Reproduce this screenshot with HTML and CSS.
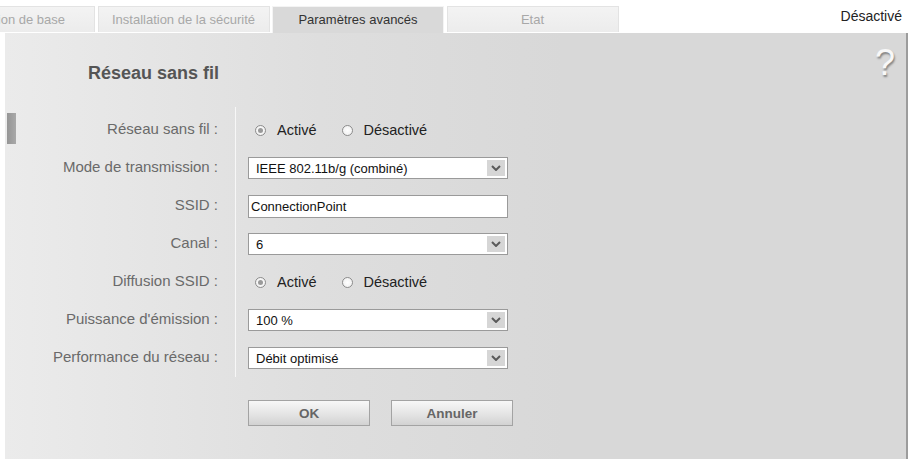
FILE: index.html
```html
<!DOCTYPE html>
<html lang="fr">
<head>
<meta charset="utf-8">
<title>Réseau sans fil</title>
<link rel="stylesheet" href="styles.css">
</head>
<body>
<div class="topbar">
  <nav class="tabs">
    <div class="tab">Installation de base</div>
    <div class="tab">Installation de la sécurité</div>
    <div class="tab active">Paramètres avancés</div>
    <div class="tab">Etat</div>
  </nav>
  <div class="status">Désactivé</div>
</div>
<main class="panel">
  <header class="panel-head">
    <h1 class="title">Réseau sans fil</h1>
    <div class="help">?</div>
  </header>
  <div class="panel-body">
    <div class="mark"></div>
    <div class="form">
      <div class="fields">
        <div class="labels">
          <div class="label">Réseau sans fil :</div>
          <div class="label">Mode de transmission :</div>
          <div class="label">SSID :</div>
          <div class="label">Canal :</div>
          <div class="label">Diffusion SSID :</div>
          <div class="label">Puissance d'émission :</div>
          <div class="label">Performance du réseau :</div>
        </div>
        <div class="controls">
          <div class="row">
            <span class="radio checked"></span><span class="rlabel">Activé</span>
            <span class="radio second"></span><span class="rlabel">Désactivé</span>
          </div>
          <div class="row">
            <div class="select"><span>IEEE 802.11b/g (combiné)</span><span class="arrow"><svg width="10" height="6" viewBox="0 0 10 6"><path d="M1 1 L5 5 L9 1" fill="none" stroke="#5a5a5a" stroke-width="2"/></svg></span></div>
          </div>
          <div class="row">
            <div class="input">ConnectionPoint</div>
          </div>
          <div class="row">
            <div class="select"><span>6</span><span class="arrow"><svg width="10" height="6" viewBox="0 0 10 6"><path d="M1 1 L5 5 L9 1" fill="none" stroke="#5a5a5a" stroke-width="2"/></svg></span></div>
          </div>
          <div class="row">
            <span class="radio checked"></span><span class="rlabel">Activé</span>
            <span class="radio second"></span><span class="rlabel">Désactivé</span>
          </div>
          <div class="row">
            <div class="select"><span>100 %</span><span class="arrow"><svg width="10" height="6" viewBox="0 0 10 6"><path d="M1 1 L5 5 L9 1" fill="none" stroke="#5a5a5a" stroke-width="2"/></svg></span></div>
          </div>
          <div class="row">
            <div class="select"><span>Débit optimisé</span><span class="arrow"><svg width="10" height="6" viewBox="0 0 10 6"><path d="M1 1 L5 5 L9 1" fill="none" stroke="#5a5a5a" stroke-width="2"/></svg></span></div>
          </div>
        </div>
      </div>
      <div class="actions">
        <button class="btn">OK</button>
        <button class="btn">Annuler</button>
      </div>
    </div>
  </div>
</main>
</body>
</html>
```
FILE: styles.css
```css
html, body {
  margin: 0;
  padding: 0;
  background: #ffffff;
  overflow: hidden;
}
body {
  width: 909px;
  height: 459px;
  font-family: "Liberation Sans", Arial, sans-serif;
  color: #222;
}
.topbar {
  display: flex;
  align-items: flex-start;
  height: 33px;
}
.tabs {
  display: flex;
  gap: 2.5px;
  margin-left: -77px;
  margin-top: 6px;
}
.tab {
  width: 172px;
  height: 26px;
  box-sizing: border-box;
  background: linear-gradient(#f3f3f3, #ececec);
  border: 1px solid #e3e3e3;
  border-bottom: none;
  color: #a8a8a8;
  font-size: 13px;
  line-height: 26px;
  text-align: center;
  white-space: nowrap;
}
.tab.active {
  height: 27px;
  background: #d9d9d9;
  border-color: #f4f4f4;
  color: #333;
}
.status {
  margin-left: auto;
  margin-right: 7px;
  margin-top: 8px;
  font-size: 14px;
  line-height: 16px;
  color: #222;
}
.panel {
  display: block;
  margin-left: 5px;
  width: 901px;
  height: 426px;
  border-right: 2px solid #9c9c9c;
  background: linear-gradient(to right, #ebebeb 0%, #dedede 35%, #d8d8d8 62%);
}
.panel-head {
  display: flex;
  justify-content: space-between;
  align-items: flex-start;
  height: 74px;
}
.title {
  margin: 30px 0 0 83px;
  font-size: 18px;
  line-height: 20px;
  font-weight: bold;
  color: #555;
}
.help {
  margin: 12px 11px 0 0;
  font-size: 36px;
  line-height: 36px;
  color: #f8f8f8;
  text-shadow: 1px 2px 2px rgba(0,0,0,0.4);
}
.panel-body {
  display: flex;
  align-items: flex-start;
}
.mark {
  width: 9px;
  height: 31px;
  margin: 6px 0 0 2px;
  background: linear-gradient(to right, #959595, #a9a9a9);
}
.form {
  display: flex;
  flex-direction: column;
}
.fields {
  display: flex;
}
.labels {
  width: 219px;
  box-sizing: border-box;
  padding: 4px 17px 0 0;
  text-align: right;
}
.label {
  height: 38px;
  line-height: 36px;
  font-size: 15px;
  color: #6a6a6a;
}
.controls {
  border-left: 1px solid #f7f7f7;
  padding: 4px 0 0 12px;
}
.row {
  height: 38px;
  display: flex;
  align-items: center;
}
.radio {
  width: 11px;
  height: 11px;
  box-sizing: border-box;
  border: 1px solid #8c8c8c;
  border-radius: 50%;
  background: radial-gradient(circle, #ffffff 0%, #f2f2f2 70%, #e2e2e2 100%);
  margin-left: 7px;
  display: flex;
  align-items: center;
  justify-content: center;
}
.radio.second {
  margin-left: 25px;
}
.radio.checked::after {
  content: "";
  width: 5px;
  height: 5px;
  border-radius: 50%;
  background: #9a9a9a;
}
.rlabel {
  margin-left: 11px;
  font-size: 14.5px;
  color: #222;
}
.select, .input {
  width: 260px;
  height: 23px;
  box-sizing: border-box;
  border: 1px solid #9a9a9a;
  background: #fff;
  font-size: 13px;
  color: #111;
  display: flex;
  align-items: center;
}
.select {
  height: 22px;
  padding-left: 7px;
  justify-content: space-between;
}
.input {
  padding-left: 2px;
}
.arrow {
  width: 18px;
  height: 16px;
  margin-right: 2px;
  background: #d6d6d6;
  display: flex;
  align-items: center;
  justify-content: center;
}
.actions {
  display: flex;
  gap: 21px;
  margin-top: 23px;
  padding-left: 232px;
}
.btn {
  width: 122px;
  height: 26px;
  border: 1px solid #a3a3a3;
  background: linear-gradient(#f8f8f8, #e6e6e6 50%, #d2d2d2);
  font-family: "Liberation Sans", Arial, sans-serif;
  font-weight: bold;
  font-size: 13.5px;
  color: #666;
  padding: 0;
}
```
